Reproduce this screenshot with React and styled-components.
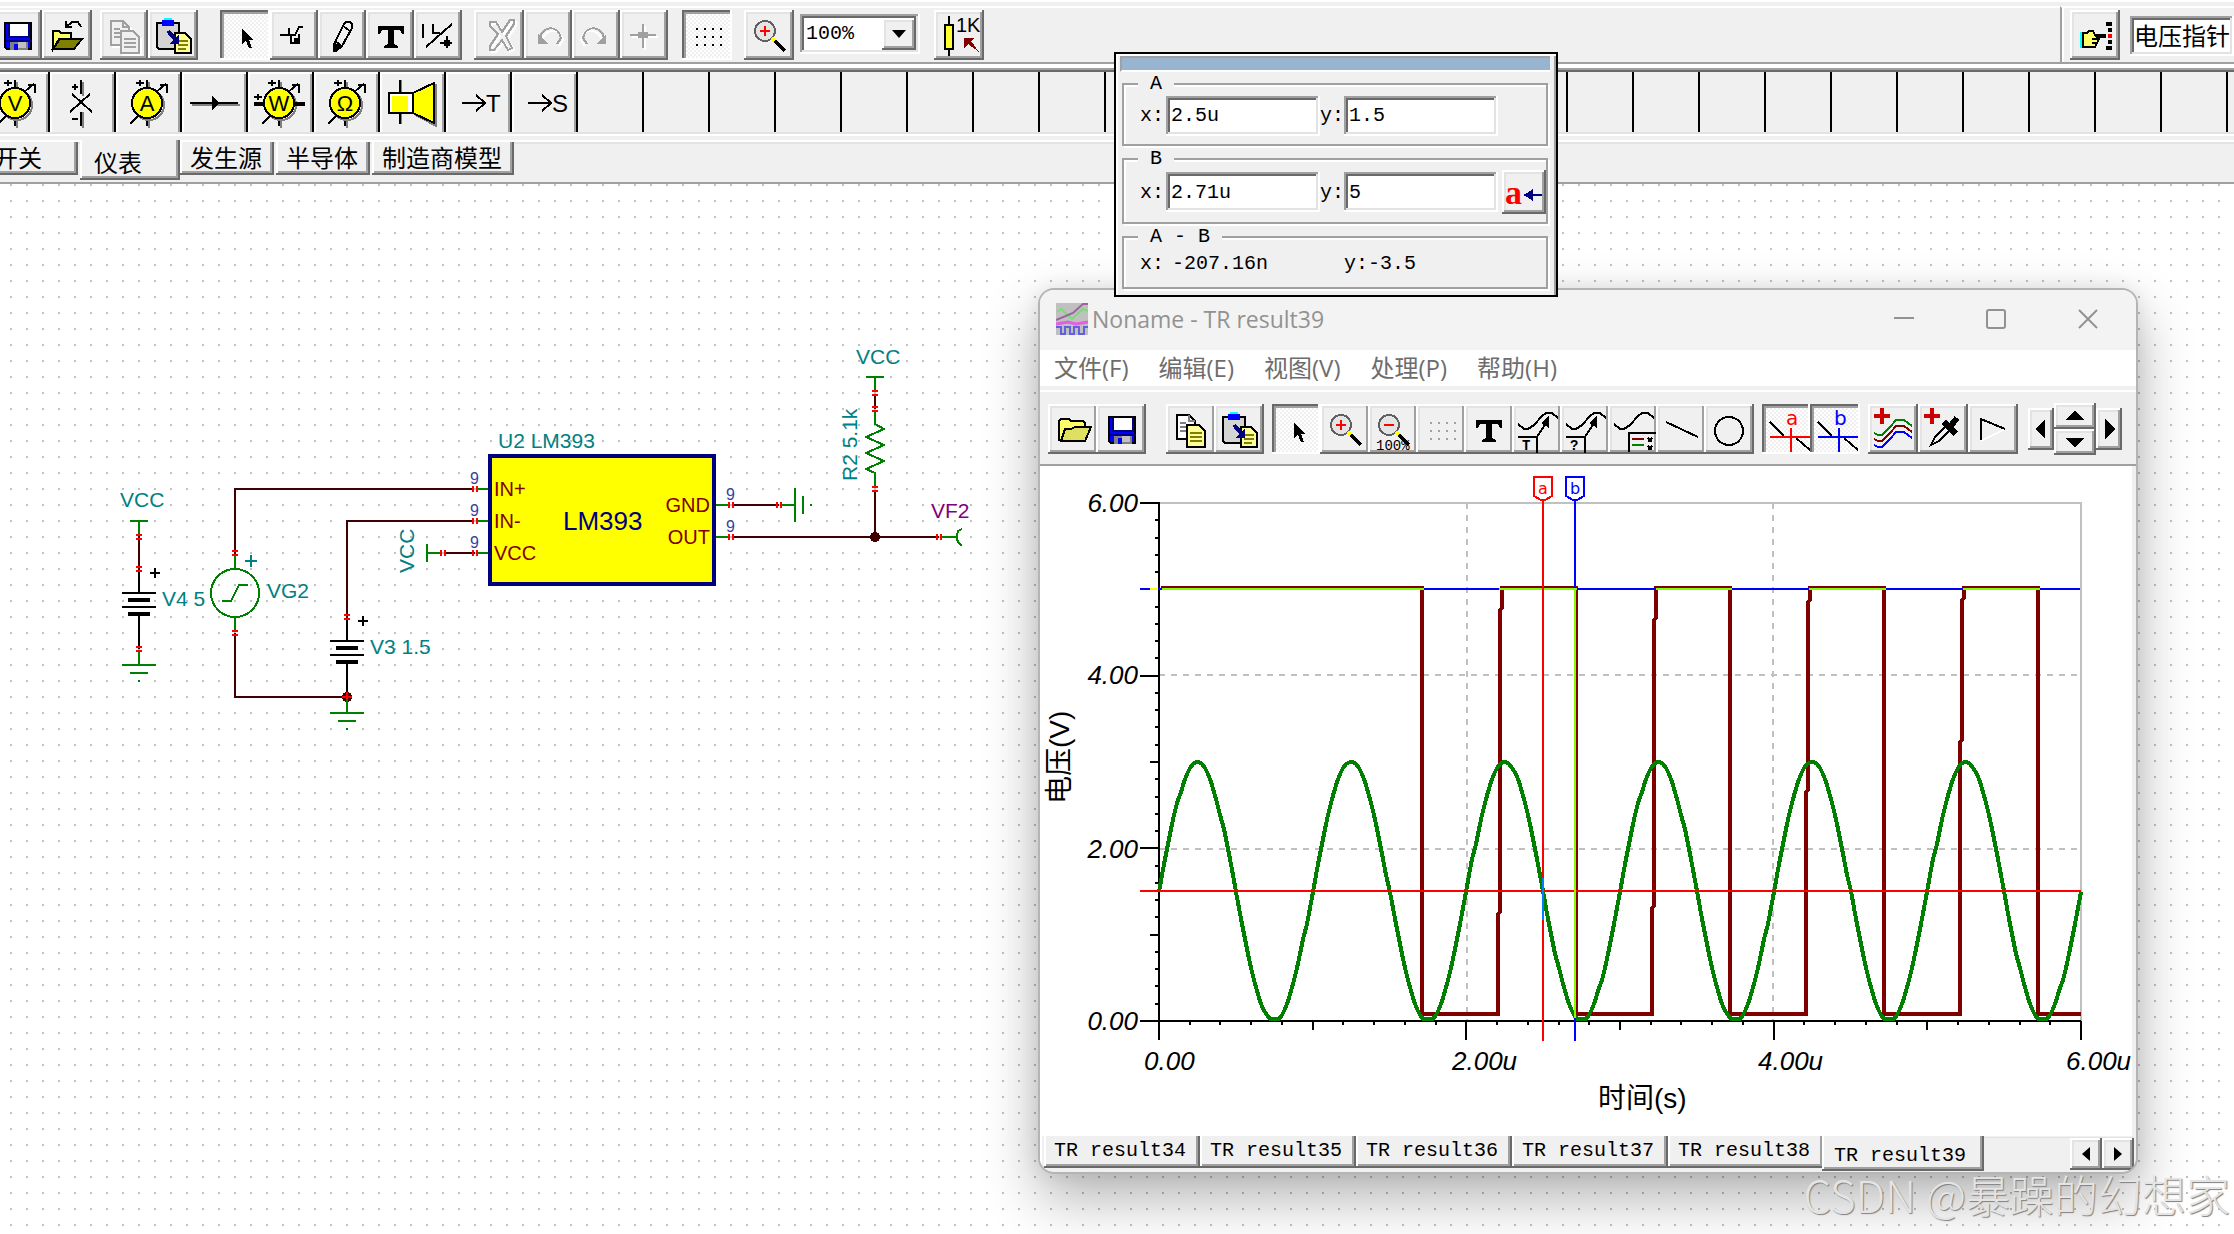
import React, { useState } from 'react'
import styled, { createGlobalStyle, css } from 'styled-components'

const GlobalStyle = createGlobalStyle`
  * {
    box-sizing: border-box;
  }
  body {
    margin: 0;
    background: #fff;
    color: #000;
    font-family: 'Liberation Mono', 'Noto Sans CJK SC', monospace;
    font-size: 20px;
  }
  button, input, select {
    font: inherit;
    color: inherit;
    margin: 0;
    padding: 0;
    border: none;
    border-radius: 0;
  }
`

const raised = css`
  background: #f0f0f0;
  box-shadow: inset -2px -2px #696969, inset 2px 2px #fff, inset -4px -4px #a0a0a0, inset 4px 4px #e3e3e3;
`
const raisedSoft = css`
  background: #f0f0f0;
  box-shadow: inset 0 -2px #696969, inset 2px 2px #fff, inset -2px -4px #a0a0a0, inset 4px 4px #e3e3e3;
`
const pressed = css`
  background: repeating-conic-gradient(#fff 0 25%, #f0f0f0 0 50%) 0 0 / 4px 4px;
  box-shadow: inset -2px -2px #fff, inset 2px 2px #696969, inset 4px 4px #a0a0a0;
`
const sunken = css`
  background: #fff;
  box-shadow: inset -2px -2px #fff, inset 2px 2px #a0a0a0, inset -4px -4px #e3e3e3, inset 4px 4px #696969;
`

const Page = styled.div`
  position: relative;
  display: flex;
  flex-direction: column;
  min-height: 100vh;
  overflow: hidden;
`

/* ---------- main toolbar ---------- */

const MainBar = styled.header`
  display: flex;
  justify-content: space-between;
  height: 66px;
  padding-top: 2px;
  background: #f0f0f0;
  border-top: 2px solid #fff;
  border-bottom: 2px solid #fff;
`
const BarSide = styled.div`
  display: flex;
  flex: ${({ $grow }) => ($grow ? 1 : 'none')};
  align-items: flex-start;
  margin-top: 2px;
  padding-top: 2px;
  border-top: 2px solid #fff;
  border-bottom: 2px solid #a0a0a0;
  border-left: ${({ $grow }) => ($grow ? 'none' : '2px solid #a0a0a0')};
  padding-left: ${({ $grow }) => ($grow ? '0' : '8px')};
  box-shadow: ${({ $grow }) => ($grow ? 'none' : 'inset 2px 0 #fff')};
`
const Group = styled.div`
  display: flex;
  flex: none;
  margin-left: ${({ $gap }) => $gap || 0}px;
`
const ToolButton = styled.button`
  flex: none;
  width: ${({ $wide }) => ($wide ? 50 : 48)}px;
  height: 50px;
  overflow: hidden;
  ${({ $down, $soft }) => ($down ? pressed : $soft ? raisedSoft : raised)}
  & svg {
    display: block;
  }
`
const ZoomBox = styled.div`
  display: grid;
  align-items: center;
  width: 120px;
  height: 40px;
  margin: 4px 0 0 6px;
  ${sunken}
`
const ZoomSelect = styled.select`
  grid-area: 1 / 1;
  width: 100%;
  height: 40px;
  padding: 0 0 2px 6px;
  appearance: none;
  background: transparent;
`
const DropArrow = styled.span`
  grid-area: 1 / 1;
  justify-self: end;
  display: grid;
  place-items: center;
  width: 34px;
  height: 32px;
  margin-right: 4px;
  pointer-events: none;
  ${raised}
`
const ProbeInput = styled.input`
  width: 104px;
  height: 40px;
  margin: 6px 0 0 10px;
  padding: 0 0 4px 4px;
  font-family: 'Noto Sans CJK SC', sans-serif;
  font-size: 24px;
  ${sunken}
`

/* ---------- instrument palette ---------- */

const Palette = styled.nav`
  display: flex;
  height: 72px;
  margin-top: 2px;
  overflow: hidden;
  background: #f0f0f0;
  border-top: 2px solid #a0a0a0;
  border-bottom: 4px solid #f0f0f0;
  box-shadow: inset 0 2px #696969, inset 0 -2px #fff, inset 0 -4px #e3e3e3;
`
const PaletteStrip = styled.div`
  display: flex;
  margin: 2px 0 4px -16px;
`
const PaletteCell = styled.button`
  flex: none;
  width: 66px;
  height: 60px;
  background: #f0f0f0;
  border-right: 2px solid #000;
  box-shadow: ${({ $filled }) => ($filled ? 'inset 2px 2px #fff, inset -2px 0 #a0a0a0' : 'none')};
  & svg {
    display: block;
  }
`

/* ---------- category tabs ---------- */

const TabBar = styled.div`
  display: flex;
  align-items: flex-start;
  height: 44px;
  background: #f0f0f0;
  border-top: 2px solid #fff;
  border-bottom: 2px solid #a0a0a0;
  box-shadow: inset 0 2px #e3e3e3;
`
const CategoryTab = styled.button`
  flex: none;
  width: ${({ $width }) => $width}px;
  height: ${({ $active }) => ($active ? 40 : 33)}px;
  margin-top: ${({ $active }) => ($active ? -2 : 0)}px;
  margin-right: ${({ $flush }) => ($flush ? 0 : 2)}px;
  padding: ${({ $active }) => ($active ? '4px 0 0 14px' : '0 0 4px 10px')};
  text-align: left;
  font-family: 'Noto Sans CJK SC', sans-serif;
  font-size: 24px;
  line-height: 28px;
  background: #f0f0f0;
  box-shadow: inset -2px -2px #696969, inset 2px 0 #fff, inset -4px -4px #a0a0a0;
  &:first-child {
    margin-left: -16px;
  }
`

/* ---------- workspace ---------- */

const Canvas = styled.main`
  position: relative;
  flex: 1;
  min-height: 1050px;
  background: linear-gradient(90deg, transparent 2px, #fff 2px) 10px 0 / 16px 16px,
    linear-gradient(#c0c0c0 2px, #fff 2px) 10px 0 / 16px 16px;
`
const Schematic = styled.svg`
  display: block;
  font-family: 'Liberation Sans', Arial, sans-serif;
  font-size: 21px;
`
const Watermark = styled.div`
  position: absolute;
  right: 4px;
  bottom: 10px;
  font-family: 'Noto Sans CJK SC', sans-serif;
  font-size: 44px;
  font-weight: 300;
  color: #e4e4e4;
  line-height: 60px;
  text-shadow: 1px 1px 1px #808080;
`

/* ---------- cursor readout ---------- */

const Readout = styled.section`
  position: absolute;
  left: 1114px;
  top: 52px;
  z-index: 2;
  width: 444px;
  padding: 2px 8px 4px 4px;
  border: 2px solid #000;
  background: #f0f0f0;
  box-shadow: inset 2px 2px #fff, inset -2px 0 #a0a0a0;
`
const ReadoutTitle = styled.div`
  height: 16px;
  margin: 0 -2px 1px 0;
  background: #99b4d1;
  border: 2px solid #a0a0a0;
  border-right: none;
  border-bottom: 2px solid #fff;
`
const Box = styled.fieldset`
  min-width: 0;
  margin: 0 0 2px 2px;
  padding: 0 0 8px;
  border: 2px solid #a0a0a0;
  box-shadow: 2px 2px #fff, inset 2px 2px #fff;
  & legend {
    position: relative;
    margin-left: 14px;
    padding: 0 12px;
    line-height: 22px;
    background: #f0f0f0;
  }
`
const BoxRow = styled.div`
  display: flex;
  align-items: center;
  padding-left: 16px;
  height: ${({ $height }) => $height}px;
  & label {
    width: 24px;
  }
  & label:first-child {
    width: 26px;
  }
`
const Field = styled.input`
  width: 154px;
  height: 40px;
  padding-left: 5px;
  ${sunken}
`
const Value = styled.span`
  display: inline-block;
  width: ${({ $width }) => ($width ? `${$width}px` : 'auto')};
`
const CopyButton = styled.button`
  width: 44px;
  height: 44px;
  margin-left: 4px;
  ${raised}
  & svg {
    display: block;
  }
`

/* ---------- result window ---------- */

const Window = styled.section`
  position: absolute;
  left: 1038px;
  top: 104px;
  display: flex;
  flex-direction: column;
  width: 1100px;
  overflow: hidden;
  border: 2px solid #b4b4b4;
  border-radius: 16px;
  background: #f0f0f0;
  box-shadow: 0 24px 56px rgba(0, 0, 0, 0.3), 0 0 20px rgba(0, 0, 0, 0.08);
`
const TitleBar = styled.header`
  display: flex;
  align-items: center;
  height: 60px;
  padding: 0 2px 2px 16px;
  background: #f3f3f3;
  color: #929292;
`
const WindowTitle = styled.h1`
  flex: 1;
  margin: 0 0 0 4px;
  font: 400 23px 'Open Sans', 'Noto Sans', sans-serif;
`
const WindowButton = styled.button`
  display: grid;
  place-items: center;
  width: 92px;
  height: 56px;
  background: none;
`
const MenuBar = styled.nav`
  display: flex;
  gap: 30px;
  height: 36px;
  padding-left: 14px;
  background: #fff;
`
const MenuItem = styled.button`
  background: none;
  color: #6d6d6d;
  font-family: 'Open Sans', 'Noto Sans CJK SC', sans-serif;
  font-size: 24px;
  line-height: 36px;
`
const GraphBar = styled.div`
  display: flex;
  align-items: center;
  height: 76px;
  margin-top: 4px;
  padding: 2px 0 0 8px;
  border-top: 2px solid #fff;
  border-bottom: 2px solid #a0a0a0;
`
const Spin = styled.div`
  display: grid;
  grid-template-columns: 26px 42px 26px;
  grid-template-rows: 26px 26px;
  align-items: center;
  margin-left: 10px;
`
const SpinButton = styled.button`
  display: grid;
  place-items: center;
  grid-row: ${({ $side }) => ($side ? '1 / 3' : 'auto')};
  grid-column: ${({ $col }) => $col};
  height: ${({ $side }) => ($side ? 42 : 26)}px;
  ${raised}
`
const Plot = styled.svg`
  display: block;
  background: #fff;
  font: italic 26px 'Liberation Sans', 'Noto Sans CJK SC', sans-serif;
`
const ResultTabs = styled.div`
  display: flex;
  align-items: flex-start;
  height: 36px;
  padding: 0 2px;
  border-left: 2px solid #fff;
`
const ResultTab = styled.button`
  flex: none;
  width: ${({ $active }) => ($active ? 162 : 156)}px;
  height: ${({ $active }) => ($active ? 35 : 32)}px;
  margin-left: ${({ $active }) => ($active ? -2 : 0)}px;
  padding: ${({ $active }) => ($active ? '4px 0 0 12px' : '0 0 2px 10px')};
  text-align: left;
  line-height: 28px;
  background: #f0f0f0;
  box-shadow: inset -2px -2px #696969, inset 2px 0 #fff, inset -4px -4px #a0a0a0;
`
const TabScroll = styled.div`
  display: flex;
  flex: 1;
  justify-content: flex-end;
  margin-top: 1px;
  border-top: 1px solid #e3e3e3;
`
const ScrollButton = styled.button`
  display: grid;
  place-items: center;
  width: 32px;
  height: 32px;
  ${raised}
`

/* ---------- icons, drawn on a 24x25 grid of double pixels ---------- */

const Icon = ({ children }) => (
  <svg width='48' height='50' viewBox='0 0 24 25' fill='none' stroke='#000' shapeRendering='crispEdges'>
    {children}
  </svg>
)

const Save = () => (
  <Icon>
    <path d='M6.5 6.5h13v13h-12l-1-1z' fill='#0000ff' />
    <path d='M9 7h9v6H9z' fill='#fff' stroke='none' />
    <path d='M8.5 7v6.5h10V7M7 15.5h13' stroke='#000080' />
    <path d='M9 16h9v4H9z' fill='#808080' stroke='none' />
    <path d='M13 16h4v3h-4z' fill='#c0c0c0' stroke='none' />
    <path d='M11 17h2v3h-2z' fill='#0000ff' stroke='none' />
  </Icon>
)
const OpenBack = () => (
  <Icon>
    <path d='M5.500 19.500v-9h3l1 1h5v3h-6z' fill='#ffff66' />
    <path d='M5.500 19.500l3.500-5h11l-4 5z' fill='#808000' />
    <path d='M12 8.500l3-2.500h3l1.500 2.500M12 5.500v3h3' />
  </Icon>
)
const OpenFolder = () => (
  <Icon>
    <path d='M5.500 18.500v-10l1-1h4l1 1h6l1 1v2' fill='#ffff66' />
    <path d='M6.500 18.500l2-6h3l2-1h8l-3 7z' fill='#e0e060' />
    <path d='M5.500 17.500l1 1h12' />
  </Icon>
)
const Copy = ({ off }) => (
  <Icon>
    {off && <path d='M6.500 6.500h6l3 3v9h-9zM11.500 11.500h6l3 3v8h-9z' stroke='#fff' />}
    <g stroke={off ? '#a0a0a0' : '#000'}>
      <path d='M5.500 5.500h6l3 3v9h-9z' fill={off ? '#f0f0f0' : '#fff'} />
      <path d='M11.500 5.500v3h3M7 9.500h3M7 11.500h3M7 13.500h3' stroke={off ? '#a0a0a0' : '#808080'} />
      <path d='M10.500 10.500h6l3 3v8h-9z' fill={off ? '#f0f0f0' : '#ffff99'} />
      <path d='M12 14.500h6M12 16.500h6M12 18.500h6' stroke={off ? '#a0a0a0' : '#808000'} />
    </g>
  </Icon>
)
const Paste = () => (
  <Icon>
    <path d='M4.500 6.500h11v13h-10l-1-1z' fill='#d4d4d4' />
    <path d='M7 5h6v3H7z' fill='#0000ff' stroke='none' />
    <path d='M8 4h4v1H8z' fill='#00ffff' stroke='none' />
    <path d='M13.500 11.500h5l3 3v7h-8z' fill='#ffff99' />
    <path d='M15 15.500h5M15 17.500h5M15 19.500h4' stroke='#808000' />
    <path d='M10 10.500l4.500 5' stroke='#000080' strokeWidth='2' />
    <path d='M15.500 12v5h-5z' fill='#000080' stroke='none' />
  </Icon>
)
const Pointer = () => (
  <Icon>
    <path d='M11 9v8l2-1.500 1.500 3.500h1.500l-1.500-4h2z' fill='#000' stroke='none' />
  </Icon>
)
const Wire = () => (
  <Icon>
    <path d='M5 12.500h4M9.500 9v4M9.500 12.500h3l2-4h2M10.500 13v3.500h4' />
    <path d='M12 14h3v3h-3z' fill='#000' stroke='none' />
    <path d='M14.500 12v5' />
  </Icon>
)
const Pencil = () => (
  <Icon>
    <path d='M13 7l1-1h2l1 1v2l-5 9-3 2.500H8V17z' fill='#f0f0f0' />
    <path d='M13 8.500l2.500 1.500M9 16l2.500 1.500' />
    <path d='M8 17l3 1-2.500 2.500H8z' fill='#000' />
  </Icon>
)
const Letter = () => (
  <Icon>
    <path d='M6 8h13v4h-1l-1-2h-3v7l2 1v1H9v-1l2-1v-7H8l-1 2H6z' fill='#000' stroke='none' />
  </Icon>
)
const Ratio = () => (
  <Icon>
    <path d='M4.500 7v7M6 18.500L19 7M9.500 7v4M9 11.500h4M13 16.500h6M16.500 13v6' />
    <path d='M15 15h3v3h-3z' fill='#000' stroke='none' />
  </Icon>
)
const Remove = () => (
  <Icon>
    <path d='M9 7h3l3 5 4-6h2v2l-4 6 3 6-2 1-3-5-4 5H9v-2l4-6-4-4z' stroke='#fff' />
    <path d='M8 6h3l3 5 4-6h2v2l-4 6 3 6-2 1-3-5-4 5H8v-2l4-6-4-4z' stroke='#a0a0a0' />
  </Icon>
)
const Undo = ({ flip }) => (
  <Icon>
    <g transform={flip ? 'translate(24 0) scale(-1 1)' : undefined}>
      <path d='M9 15c1-5 9-7 10.500 0l-2 3' stroke='#fff' />
      <path d='M8 14c1-6 9-7 10.500 0l-2 3' stroke='#a0a0a0' />
      <path d='M7 12v5h5z' fill='#a0a0a0' stroke='none' />
    </g>
  </Icon>
)
const Snap = () => (
  <Icon>
    <path d='M6 13.500h13M12.500 8v12' stroke='#fff' />
    <path d='M5 12.500h13M11.500 7v12' stroke='#a0a0a0' />
    <path d='M9 11h5v3H9z' fill='#a0a0a0' stroke='none' />
  </Icon>
)
const GridDots = ({ off }) => (
  <Icon>
    {[9, 13, 17].map((y) =>
      [7, 11, 15, 19].map((x) => (
        <rect key={`${x}-${y}`} x={x} y={y} width='1' height='1' fill={off ? '#a0a0a0' : '#000'} stroke='none' />
      ))
    )}
  </Icon>
)
const Magnifier = ({ minus, note }) => (
  <Icon>
    <circle cx='10.500' cy='10.500' r='5' fill='#e4e4e4' stroke='#606060' />
    <path d='M14 14l2 2' stroke='#ffff00' strokeWidth='2' />
    <path d='M15.500 15.500l5 5' strokeWidth='2' />
    <path d={minus ? 'M8 10.500h5' : 'M8 10.500h5M10.500 8v5'} stroke='#ff0000' />
    {note && (
      <text x='4' y='23' fontSize='7' fill='#000' stroke='none'>
        100%
      </text>
    )}
  </Icon>
)
const Resistor = () => (
  <Icon>
    <path d='M7.500 3v20' />
    <path d='M5.500 7.500h4v12h-4z' fill='#ffff33' />
    <text x='11' y='11' fontSize='10' fill='#000' stroke='none' fontFamily='Liberation Sans, sans-serif'>
      1K
    </text>
    <path d='M15 14h5l-1.500 1.500 4 5.500-5.500-4L15 19z' fill='#800000' stroke='none' />
  </Icon>
)
const Hand = () => (
  <Icon>
    <path d='M5 11h1v8H5z' fill='#00ffff' stroke='none' />
    <path d='M6.500 11.500h2l1-1h2l1 2h5v1h-4l1 1-1 2-1 2h-6v-2z' fill='#ffff66' />
    <path d='M11 14.500h3M11 16.500h2' />
    <path d='M18 6h3v2h-3zM19 9h2v2h-2zM19 15h2v2h-2zM18 18h3v2h-3z' fill='#000' stroke='none' />
    <path d='M19 12h2v2h-2z' fill='#ff0000' stroke='none' />
  </Icon>
)
const wave = 'M3 10l3 2.500h2l3-2 4-4.500 2-1.500h3l3 2.500'
const CurveNote = ({ mark }) => (
  <Icon>
    <path d={wave} />
    <path d='M3 16.500h9.500v8M12.500 16.500L18 8' />
    <path d='M18.500 6v6l-4-2.500z' fill='#000' stroke='none' />
    <text x='5' y='23' fontSize='7' fontWeight='700' fill='#000' stroke='none'>
      {mark}
    </text>
  </Icon>
)
const LegendIcon = () => (
  <Icon>
    <path d={wave} />
    <path d='M10.500 24V14.500H24' />
    <path d='M12 17.500h6' stroke='#800000' />
    <path d='M12 20.500h6' stroke='#008000' />
    <path d='M20 17l2 2M22 17l-2 2M20 21l2 2M22 21l-2 2' />
  </Icon>
)
const LineIcon = () => (
  <Icon>
    <path d='M5 9l16 7.500' />
  </Icon>
)
const CircleIcon = () => (
  <Icon>
    <circle cx='12.500' cy='13.500' r='7' />
  </Icon>
)
const CursorIcon = ({ name, color }) => (
  <Icon>
    <path d='M4 9l7 7M17 17l7 6' />
    <path d='M4 16.500h20M14.500 12v12' stroke={color} />
    <text x='12' y='10.500' fontSize='10' fill={color} stroke='none' fontFamily='DejaVu Sans, sans-serif'>
      {name}
    </text>
  </Icon>
)
const AddCurves = () => (
  <Icon>
    {['#008000', '#800000', '#0000ff'].map((c, i) => (
      <path key={c} d='M3 14.500l2 1h2l4-4 3-3.500h4l4 3' stroke={c} transform={`translate(0 ${i * 3})`} />
    ))}
    <path d='M3 6h8M7 2v8' stroke='#cc0000' strokeWidth='2' />
  </Icon>
)
const AddProbe = () => (
  <Icon>
    <path d='M6.500 20.500l2-4 6-6 2 2-6 6z' fill='#f0f0f0' />
    <path d='M13 9l6 6M15.500 12l4-5' strokeWidth='3' />
    <path d='M3 6h8M7 2v8' stroke='#cc0000' strokeWidth='2' />
  </Icon>
)
const Play = () => (
  <Icon>
    <path d='M6.500 18.500l12-6' stroke='#fff' />
    <path d='M6.500 18V7.500l12 5' />
  </Icon>
)
const arrowShapes = {
  left: 'M12 0v20L2 10z',
  right: 'M4 0v20L14 10z',
  up: 'M8 4l9 10H-1z',
  down: 'M8 16l9-10H-1z',
}
const Arrow = ({ dir }) => (
  <svg width='16' height='20' viewBox='0 0 16 20' overflow='visible' shapeRendering='crispEdges'>
    <path d={arrowShapes[dir]} />
  </svg>
)

/* palette symbols, 32x30 grid */
const Symbol = ({ children }) => (
  <svg width='64' height='60' viewBox='0 0 32 30' fill='none' stroke='#000' shapeRendering='crispEdges'>
    {children}
  </svg>
)
const Meter = ({ letter, power }) => (
  <Symbol>
    <path d='M16.500 5v4M16.500 24v4' stroke='#808080' />
    <path d='M15.500 4v4M15.500 23v4M10 5.500h4M12 4v3M7 26l4-4M20 10l5-4M22 6.500h3.500v4' />
    <circle cx='16.500' cy='16.500' r='7.500' stroke='#808080' />
    <circle cx='15.500' cy='15.500' r='7.500' fill='#ffff00' />
    {power && <path d='M3 16h5M23 16h5.500' strokeWidth='2' />}
    {power && <path d='M3 12.500h4M5 11v3' />}
    <text
      x='15.500'
      y='19.500'
      textAnchor='middle'
      fontSize='11'
      fill='#000'
      stroke='none'
      fontFamily='Liberation Sans, sans-serif'
    >
      {letter}
    </text>
  </Symbol>
)
const OpenPins = () => (
  <Symbol>
    <path d='M16.500 5v7M16.500 20v8' stroke='#808080' />
    <path d='M15.500 4v7M15.500 20v7M11 11l10 9M20 11l-10 9M11 7.500h3M12.500 6v3M11 23.500h3' />
  </Symbol>
)
const ArrowLine = () => (
  <Symbol>
    <path d='M5 16.500h24' stroke='#808080' />
    <path d='M4 15.500h24' />
    <path d='M15 12v7l4-3.500z' fill='#000' stroke='none' />
  </Symbol>
)
const Speaker = () => (
  <Symbol>
    <path d='M10.500 4v6M10.500 21v5M17 21l11 6V6' stroke='#808080' />
    <path d='M10 4v6M10 21v5' />
    <path d='M4.500 10.500h12v10h-12z' fill='#fff' />
    <path d='M6 12h8v8H6z' fill='#ffff00' stroke='none' />
    <path d='M16.500 10.500L27 5.500v20l-10.500-5z' fill='#ffff00' />
  </Symbol>
)
const ToLetter = ({ letter }) => (
  <Symbol>
    <path d='M8 15.500h11M15 11.500l4.500 4-4.500 4' />
    <text x='20' y='20' fontSize='12' fill='#000' stroke='none' fontFamily='Liberation Sans, sans-serif'>
      {letter}
    </text>
  </Symbol>
)

/* ---------- schematic parts ---------- */

const GREEN = '#008000'
const WIRE = '#400000'
const TEAL = '#008080'

// pair of red ticks where a pin meets a wire
const Pin = ({ x, y, flat }) => (
  <path d={flat ? `M${x - 2} ${y - 3}v6M${x + 2} ${y - 3}v6` : `M${x - 3} ${y - 2}h6M${x - 3} ${y + 2}h6`} stroke='#ff0000' />
)
const Ground = ({ x, y }) => (
  <path d={`M${x} ${y - 14}v14M${x - 17} ${y}h34M${x - 9} ${y + 8}h18M${x - 1} ${y + 16}h2`} stroke={GREEN} />
)
const Battery = ({ x, y }) => (
  <g stroke='#000'>
    <path d={`M${x} ${y - 22}v22M${x - 17} ${y}h34M${x - 17} ${y + 14}h34M${x + 11} ${y - 20}h10M${x + 16} ${y - 25}v10`} />
    <path d={`M${x - 11} ${y + 7}h22M${x - 11} ${y + 21}h22`} strokeWidth='4' />
    <path d={`M${x} ${y + 21}v35`} />
  </g>
)
const Label = ({ children, fill = TEAL, ...rest }) => (
  <text fill={fill} stroke='none' {...rest}>
    {children}
  </text>
)

function Circuit() {
  return (
    <Schematic width='1000' height='600' viewBox='0 184 1000 600' fill='none' strokeWidth='2' shapeRendering='crispEdges'>
      <g stroke={WIRE}>
        <path d='M139 535v36M473 489H235v66M473 521H347v98M445 553h30M235 633v64h112' />
        <path d='M733 505h46M733 537h206M875 395v14M875 491v46' />
      </g>
      <g stroke={GREEN}>
        <path d='M130 521h18M139 521v15M477 489h12M477 521h12M477 553h12M427 544v18M427 553h15' />
        <path d='M235 555v14M235 617v14M716 505h14M716 537h14M781 505h14M795 488v34M803 496v18M810 505h2' />
        <path d='M866 377h18M875 377v14M875 411v13l9 5-18 8 18 8-18 8 18 8-18 8 9 4v14' />
        <path d='M941 537h15M962 529l-4 2-1 4v5l2 3 3 3' />
        <circle cx='235' cy='593' r='24' />
        <path d='M222 601h9l8-16h9' />
      </g>

      <Battery x={139} y={593} />
      <Battery x={347} y={641} />
      <circle cx='347' cy='697' r='5' fill={WIRE} />
      <path d='M342 697h10M347 692v10' stroke='#ff0000' />
      <Ground x={139} y={665} />
      <Ground x={347} y={713} />
      <circle cx='875' cy='537' r='5' fill={WIRE} />

      <Pin x={139} y={537} />
      <Pin x={139} y={569} />
      <Pin x={139} y={649} />
      <Pin x={235} y={553} />
      <Pin x={235} y={633} />
      <Pin x={347} y={617} />
      <Pin x={875} y={393} />
      <Pin x={875} y={409} />
      <Pin x={875} y={489} />
      <Pin flat x={475} y={489} />
      <Pin flat x={475} y={521} />
      <Pin flat x={475} y={553} />
      <Pin flat x={443} y={553} />
      <Pin flat x={731} y={505} />
      <Pin flat x={731} y={537} />
      <Pin flat x={779} y={505} />
      <Pin flat x={939} y={537} />

      <rect x='490' y='456' width='224' height='128' fill='#ffff00' stroke='#000080' strokeWidth='4' />
      <path d='M245 561h12M251 555v12' stroke={TEAL} />

      <Label x='120' y='507'>VCC</Label>
      <Label x='162' y='606'>V4 5</Label>
      <Label x='267' y='598'>VG2</Label>
      <Label x='370' y='654'>V3 1.5</Label>
      <Label x='498' y='448'>U2 LM393</Label>
      <Label x='856' y='364'>VCC</Label>
      <Label x='931' y='518' fill='#800080'>VF2</Label>
      <Label transform='translate(414 573) rotate(-90)'>VCC</Label>
      <Label transform='translate(857 481) rotate(-90)'>R2 5.1k</Label>

      <g fontSize='20'>
        <Label x='494' y='496' fill='#800000'>IN+</Label>
        <Label x='494' y='528' fill='#800000'>IN-</Label>
        <Label x='494' y='560' fill='#800000'>VCC</Label>
        <Label x='710' y='512' textAnchor='end' fill='#800000'>GND</Label>
        <Label x='710' y='544' textAnchor='end' fill='#800000'>OUT</Label>
      </g>
      <Label x='563' y='530' fontSize='26' fill='#000080'>LM393</Label>
      <g fontSize='16'>
        {[484, 516, 548].map((y) => (
          <Label key={y} x='470' y={y} fill='#4040a0'>9</Label>
        ))}
        {[500, 532].map((y) => (
          <Label key={y} x='726' y={y} fill='#4040a0'>9</Label>
        ))}
      </g>
    </Schematic>
  )
}

/* ---------- transient plot ---------- */

const LEFT = 119
const RIGHT = 1041
const TOP = 37
const BOTTOM = 555
const px = (t) => Math.round(LEFT + (t * (RIGHT - LEFT)) / 6)
const py = (v) => Math.round(BOTTOM - (v * (BOTTOM - TOP)) / 6)

const sine = Array.from({ length: 301 }, (_, i) => {
  const t = i / 50
  return `${px(t)},${Math.min(py(1.5 + 1.5 * Math.sin(2 * Math.PI * t)), 553)}`
}).join(' ')

const falls = [382, 536, 690, 844, 998]
// x of the rising edge, then the two heights where it leans right
const rises = [
  [458, 448, 144],
  [612, 442, 154],
  [766, 326, 136],
  [920, 276, 134],
]
const HIGH = 122
const LOW = 548
const riseTo = ([x, low, high]) => `H${x}V${low}l2 -2V${high}l2 -2V${HIGH}`
const output =
  `M${LEFT + 2} ${HIGH}` + falls.map((x, i) => `H${x}V${LOW}` + (rises[i] ? riseTo(rises[i]) : `H${RIGHT}`)).join('')

const ticks = Array.from({ length: 31 }, (_, i) => i)
const tickSize = (i, big, mid) => (i % 10 === 0 ? big : i % 5 === 0 ? mid : 4)

const Flag = ({ x, name, color }) => (
  <g>
    <path d={`M${x - 9} 11h18v19l-7 4h-4l-7-4z`} stroke={color} fill='#fff' />
    <text
      x={x}
      y='28'
      textAnchor='middle'
      fill={color}
      stroke='none'
      fontSize='16'
      fontStyle='normal'
      fontFamily='DejaVu Sans, sans-serif'
    >
      {name}
    </text>
  </g>
)

function Chart() {
  const aX = 503
  const bX = 535
  return (
    <Plot width='1092' height='670' viewBox='0 0 1092 670' fill='none' strokeWidth='2' shapeRendering='crispEdges'>
      <g stroke='#c0c0c0'>
        <path d={`M${LEFT} ${TOP}H${RIGHT}V${BOTTOM}`} />
        <path
          d={`M${LEFT} 209H${RIGHT}M${LEFT} 383H${RIGHT}M427 ${TOP}V${BOTTOM}M733 ${TOP}V${BOTTOM}`}
          strokeDasharray='6 6'
        />
      </g>
      <path d={`M100 ${TOP}h19V${BOTTOM}H${RIGHT}`} stroke='#000' />
      <g stroke='#000'>
        {ticks.map((i) => (
          <path key={i} d={`M${LEFT} ${py(i / 5)}h-${tickSize(i, 19, 9)}M${px(i / 5)} ${BOTTOM}v${tickSize(i, 19, 9)}`} />
        ))}
      </g>
      <path d={output} stroke='#800000' strokeWidth='4' />
      <path d='M100 123h940' stroke='#0000ff' />
      <path d='M122 123h262M459 123h78M616 123h76M769 123h77M923 123h77' stroke='#80ff00' />
      <path d='M110 123h8' stroke='#ffff00' />
      <polyline points={sine} stroke='#008000' strokeWidth='4' />
      <path d={`M100 425H${RIGHT}`} stroke='#ff0000' />
      <path d={`M${aX} 33v542`} stroke='#ff0000' />
      <path d={`M${bX} 33v542`} stroke='#0000ff' />
      <path d={`M${bX} 122v430`} stroke='#80ff00' />
      <path d={`M${aX} 412v42`} stroke='#0080ff' />
      <Flag x={aX} name='a' color='#ff0000' />
      <Flag x={bX} name='b' color='#0000ff' />
      <g fill='#000' stroke='none'>
        <text x='98' y='46' textAnchor='end'>6.00</text>
        <text x='98' y='218' textAnchor='end'>4.00</text>
        <text x='98' y='392' textAnchor='end'>2.00</text>
        <text x='98' y='564' textAnchor='end'>0.00</text>
        <text x='104' y='604'>0.00</text>
        <text x='412' y='604'>2.00u</text>
        <text x='718' y='604'>4.00u</text>
        <text x='1026' y='604'>6.00u</text>
        <text x='558' y='642' fontSize='28' fontStyle='normal'>时间(s)</text>
        <text transform='translate(29 338) rotate(-90)' fontSize='28' fontStyle='normal'>电压(V)</text>
      </g>
    </Plot>
  )
}

/* ---------- page ---------- */

const palette = [
  <Meter letter='V' />,
  <OpenPins />,
  <Meter letter='A' />,
  <ArrowLine />,
  <Meter letter='W' power />,
  <Meter letter='Ω' />,
  <Speaker />,
  <ToLetter letter='T' />,
  <ToLetter letter='S' />,
]
const categories = [
  { name: '开关', width: 94 },
  { name: '仪表', width: 100 },
  { name: '发生源', width: 94 },
  { name: '半导体', width: 94 },
  { name: '制造商模型', width: 142 },
]
const results = [34, 35, 36, 37, 38, 39]
const menus = ['文件(F)', '编辑(E)', '视图(V)', '处理(P)', '帮助(H)']
const graphTools = [
  ['pointer', <Pointer />],
  ['zoom in', <Magnifier />],
  ['zoom 100%', <Magnifier minus note />],
  ['grid', <GridDots off />],
  ['text', <Letter />],
  ['curve label', <CurveNote mark='T' />],
  ['curve query', <CurveNote mark='?' />],
  ['legend', <LegendIcon />],
  ['line', <LineIcon />],
  ['circle', <CircleIcon />],
]

function ResultWindow() {
  const [active, setActive] = useState(39)
  return (
    <Window>
      <TitleBar>
        <svg width='32' height='32' viewBox='0 0 32 32' fill='none' strokeWidth='2'>
          <path d='M0 0h32v32H0z' fill='#c0c0c0' />
          <path d='M1 9l4-3 11 10L27 6l5 2' stroke='#77dd77' />
          <path d='M0 17l17-7L27 1h5' stroke='#a060a0' />
          <path d='M0 21l12-2 8 2 12-2' stroke='#e060e0' strokeWidth='3' />
          <path d='M0 24h5v7h4v-7h5v7h4v-7h5v7h5v-7h4' stroke='#6060e0' />
        </svg>
        <WindowTitle>Noname - TR result39</WindowTitle>
        <WindowButton aria-label='minimize'>
          <svg width='20' height='20' stroke='#929292' strokeWidth='2'>
            <path d='M0 9h20' />
          </svg>
        </WindowButton>
        <WindowButton aria-label='maximize'>
          <svg width='20' height='20' fill='none' stroke='#929292' strokeWidth='2'>
            <rect x='1' y='1' width='18' height='18' rx='2' />
          </svg>
        </WindowButton>
        <WindowButton aria-label='close'>
          <svg width='20' height='20' stroke='#929292' strokeWidth='2'>
            <path d='M1 1l18 18M19 1L1 19' />
          </svg>
        </WindowButton>
      </TitleBar>
      <MenuBar>
        {menus.map((m) => (
          <MenuItem key={m}>{m}</MenuItem>
        ))}
      </MenuBar>
      <GraphBar>
        <Group>
          <ToolButton $soft aria-label='open'><OpenFolder /></ToolButton>
          <ToolButton $wide aria-label='save'><Save /></ToolButton>
        </Group>
        <Group $gap={20}>
          <ToolButton $soft aria-label='copy'><Copy /></ToolButton>
          <ToolButton $wide aria-label='paste'><Paste /></ToolButton>
        </Group>
        <Group $gap={8}>
          {graphTools.map(([name, icon], i) => (
            <ToolButton key={name} aria-label={name} $down={i === 0} $soft={i < 9} $wide={i === 9}>
              {icon}
            </ToolButton>
          ))}
        </Group>
        <Group $gap={8}>
          <ToolButton $down aria-label='cursor a'><CursorIcon name='a' color='#ff0000' /></ToolButton>
          <ToolButton $down $wide aria-label='cursor b'><CursorIcon name='b' color='#0000ff' /></ToolButton>
        </Group>
        <Group $gap={8}>
          <ToolButton $wide aria-label='add curves'><AddCurves /></ToolButton>
          <ToolButton $wide aria-label='add probe'><AddProbe /></ToolButton>
          <ToolButton $wide aria-label='play'><Play /></ToolButton>
        </Group>
        <Spin>
          <SpinButton $side $col={1} aria-label='left'><Arrow dir='left' /></SpinButton>
          <SpinButton $col={2} aria-label='up'><Arrow dir='up' /></SpinButton>
          <SpinButton $side $col={3} aria-label='right'><Arrow dir='right' /></SpinButton>
          <SpinButton $col={2} aria-label='down'><Arrow dir='down' /></SpinButton>
        </Spin>
      </GraphBar>
      <Chart />
      <ResultTabs>
        {results.map((n) => (
          <ResultTab key={n} $active={n === active} onClick={() => setActive(n)}>
            TR result{n}
          </ResultTab>
        ))}
        <TabScroll>
          <ScrollButton aria-label='previous'>
            <svg width='8' height='14'><path d='M8 0v14L0 7z' /></svg>
          </ScrollButton>
          <ScrollButton aria-label='next'>
            <svg width='8' height='14'><path d='M0 0v14l8-7z' /></svg>
          </ScrollButton>
        </TabScroll>
      </ResultTabs>
    </Window>
  )
}

function CursorReadout() {
  return (
    <Readout>
      <ReadoutTitle />
      <Box>
        <legend>A</legend>
        <BoxRow $height={41}>
          <label htmlFor='ax'>x:</label>
          <Field id='ax' defaultValue='2.5u' />
          <label htmlFor='ay'>y:</label>
          <Field id='ay' defaultValue='1.5' />
        </BoxRow>
      </Box>
      <Box>
        <legend>B</legend>
        <BoxRow $height={44}>
          <label htmlFor='bx'>x:</label>
          <Field id='bx' defaultValue='2.71u' />
          <label htmlFor='by'>y:</label>
          <Field id='by' defaultValue='5' />
          <CopyButton aria-label='a'>
            <svg width='44' height='44' shapeRendering='crispEdges'>
              <text x='3' y='34' fontSize='34' fontWeight='700' fill='#ff0000' fontFamily='Liberation Serif, serif'>
                a
              </text>
              <path d='M22 25h18M24 25l6-4v8z' stroke='#000080' strokeWidth='2' fill='#000080' />
            </svg>
          </CopyButton>
        </BoxRow>
      </Box>
      <Box>
        <legend>A - B</legend>
        <BoxRow $height={31}>
          <Value $width={32}>x:</Value>
          <Value $width={172}>-207.16n</Value>
          <Value>y:-3.5</Value>
        </BoxRow>
      </Box>
    </Readout>
  )
}

function App() {
  const [category, setCategory] = useState('仪表')

  return (
    <Page>
      <GlobalStyle />
      <MainBar>
        <BarSide $grow>
          <Group $gap={-8}>
            <ToolButton $wide aria-label='save'><Save /></ToolButton>
            <ToolButton $wide aria-label='open'><OpenBack /></ToolButton>
          </Group>
          <Group $gap={8}>
            <ToolButton aria-label='copy'><Copy off /></ToolButton>
            <ToolButton $wide aria-label='paste'><Paste /></ToolButton>
          </Group>
          <Group $gap={22}>
            <ToolButton $down $wide aria-label='pointer'><Pointer /></ToolButton>
            <ToolButton aria-label='wire'><Wire /></ToolButton>
            <ToolButton aria-label='pencil'><Pencil /></ToolButton>
            <ToolButton aria-label='text'><Letter /></ToolButton>
            <ToolButton aria-label='ratio'><Ratio /></ToolButton>
          </Group>
          <Group $gap={12}>
            <ToolButton $wide aria-label='delete'><Remove /></ToolButton>
            <ToolButton aria-label='undo'><Undo /></ToolButton>
            <ToolButton aria-label='redo'><Undo flip /></ToolButton>
            <ToolButton aria-label='snap'><Snap /></ToolButton>
          </Group>
          <Group $gap={14}>
            <ToolButton $down $wide aria-label='grid'><GridDots /></ToolButton>
          </Group>
          <Group $gap={12}>
            <ToolButton $wide aria-label='zoom'><Magnifier /></ToolButton>
          </Group>
          <ZoomBox>
            <ZoomSelect aria-label='zoom level' defaultValue='100%'>
              <option>100%</option>
            </ZoomSelect>
            <DropArrow>
              <svg width='14' height='8'><path d='M0 0h14L7 8z' /></svg>
            </DropArrow>
          </ZoomBox>
          <Group $gap={14}>
            <ToolButton $wide aria-label='resistor'><Resistor /></ToolButton>
          </Group>
        </BarSide>
        <BarSide>
          <ToolButton $wide aria-label='pick'><Hand /></ToolButton>
          <ProbeInput aria-label='probe' defaultValue='电压指针' />
        </BarSide>
      </MainBar>
      <Palette>
        <PaletteStrip>
          {Array.from({ length: 40 }, (_, i) => (
            <PaletteCell key={i} $filled={i < palette.length} aria-label={`slot ${i + 1}`}>
              {palette[i]}
            </PaletteCell>
          ))}
        </PaletteStrip>
      </Palette>
      <TabBar>
        {categories.map((c, i) => (
          <CategoryTab
            key={c.name}
            $width={c.width}
            $active={c.name === category}
            $flush={i === 1}
            onClick={() => setCategory(c.name)}
          >
            {c.name}
          </CategoryTab>
        ))}
      </TabBar>
      <Canvas>
        <Circuit />
        <ResultWindow />
        <Watermark>CSDN @暴躁的幻想家</Watermark>
      </Canvas>
      <CursorReadout />
    </Page>
  )
}

export default App
